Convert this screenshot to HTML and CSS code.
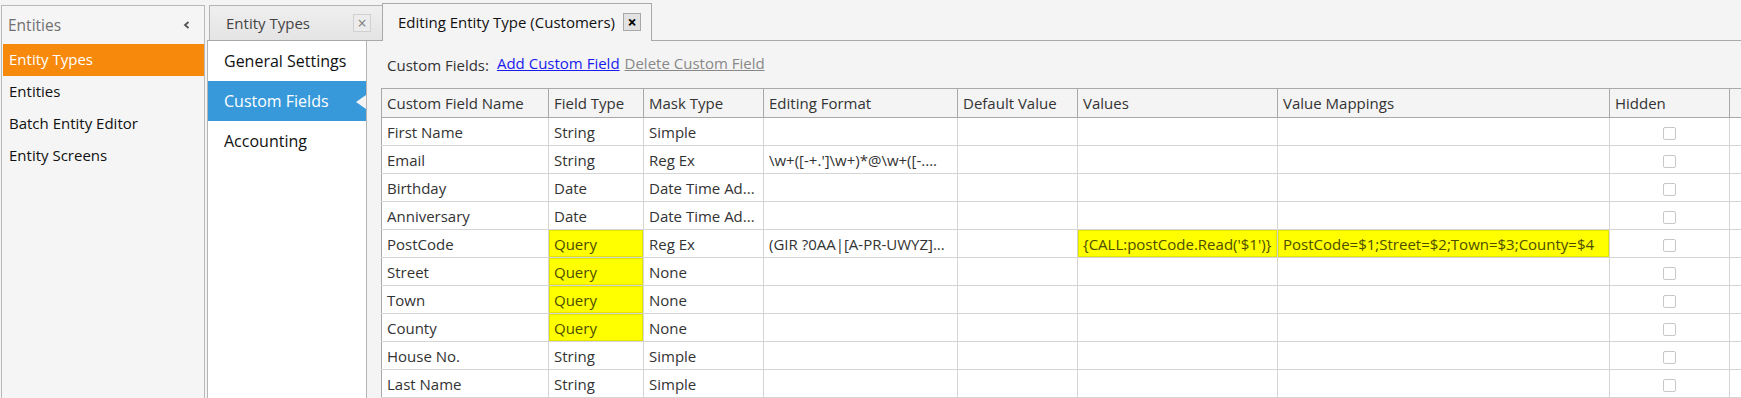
FILE: index.html
```html
<!DOCTYPE html>
<html lang="en">
<head>
    <meta charset="UTF-8">
    <title>Editing Entity Type (Customers)</title>
    <link rel="stylesheet" href="styles.css">
</head>
<body>
    <div class="app">
        <!-- Left navigation -->
        <aside class="side">
            <div class="side-head">
                <span>Entities</span>
                <svg class="collapse" width="7" height="8" viewBox="0 0 7 8"><path d="M5.5 1 L2 4 L5.5 7" fill="none" stroke="#555" stroke-width="1.8"/></svg>
            </div>
            <ul class="side-list">
                <li class="selected">Entity Types</li>
                <li>Entities</li>
                <li>Batch Entity Editor</li>
                <li>Entity Screens</li>
            </ul>
        </aside>

        <div class="work">
            <div class="tabs">
                <div class="tab">
                    <span>Entity Types</span>
                    <span class="tab-close">&times;</span>
                </div>
                <div class="tab active">
                    <span>Editing Entity Type (Customers)</span>
                    <span class="tab-close">&times;</span>
                </div>
            </div>

            <div class="page">
                <nav class="menu">
                    <div class="menu-item">General Settings</div>
                    <div class="menu-item current">Custom Fields</div>
                    <div class="menu-item">Accounting</div>
                </nav>

                <section class="content">
                    <div class="toolbar">
                        <span class="label">Custom Fields:</span>
                        <a href="#" class="link">Add Custom Field</a>
                        <a href="#" class="link disabled">Delete Custom Field</a>
                    </div>

                    <table class="grid">
                        <colgroup>
                            <col style="width:167px">
                            <col style="width:95px">
                            <col style="width:120px">
                            <col style="width:194px">
                            <col style="width:120px">
                            <col style="width:200px">
                            <col style="width:332px">
                            <col style="width:120px">
                            <col style="width:60px">
                        </colgroup>
                        <thead>
                            <tr>
                                <th>Custom Field Name</th>
                                <th>Field Type</th>
                                <th>Mask Type</th>
                                <th>Editing Format</th>
                                <th>Default Value</th>
                                <th>Values</th>
                                <th>Value Mappings</th>
                                <th>Hidden</th>
                                <th></th>
                            </tr>
                        </thead>
                        <tbody>
                            <tr>
                                <td>First Name</td><td>String</td><td>Simple</td><td></td><td></td><td></td><td></td>
                                <td class="check"><span class="box"></span></td><td></td>
                            </tr>
                            <tr>
                                <td>Email</td><td>String</td><td>Reg Ex</td><td>\w+([-+.']\w+)*@\w+([-....</td><td></td><td></td><td></td>
                                <td class="check"><span class="box"></span></td><td></td>
                            </tr>
                            <tr>
                                <td>Birthday</td><td>Date</td><td>Date Time Ad...</td><td></td><td></td><td></td><td></td>
                                <td class="check"><span class="box"></span></td><td></td>
                            </tr>
                            <tr>
                                <td>Anniversary</td><td>Date</td><td>Date Time Ad...</td><td></td><td></td><td></td><td></td>
                                <td class="check"><span class="box"></span></td><td></td>
                            </tr>
                            <tr>
                                <td>PostCode</td><td class="mark">Query</td><td>Reg Ex</td><td>(GIR ?0AA|[A-PR-UWYZ]...</td><td></td>
                                <td class="mark">{CALL:postCode.Read('$1')}</td>
                                <td class="mark">PostCode=$1;Street=$2;Town=$3;County=$4</td>
                                <td class="check"><span class="box"></span></td><td></td>
                            </tr>
                            <tr>
                                <td>Street</td><td class="mark">Query</td><td>None</td><td></td><td></td><td></td><td></td>
                                <td class="check"><span class="box"></span></td><td></td>
                            </tr>
                            <tr>
                                <td>Town</td><td class="mark">Query</td><td>None</td><td></td><td></td><td></td><td></td>
                                <td class="check"><span class="box"></span></td><td></td>
                            </tr>
                            <tr>
                                <td>County</td><td class="mark">Query</td><td>None</td><td></td><td></td><td></td><td></td>
                                <td class="check"><span class="box"></span></td><td></td>
                            </tr>
                            <tr>
                                <td>House No.</td><td>String</td><td>Simple</td><td></td><td></td><td></td><td></td>
                                <td class="check"><span class="box"></span></td><td></td>
                            </tr>
                            <tr>
                                <td>Last Name</td><td>String</td><td>Simple</td><td></td><td></td><td></td><td></td>
                                <td class="check"><span class="box"></span></td><td></td>
                            </tr>
                        </tbody>
                    </table>
                </section>
            </div>
        </div>
    </div>
</body>
</html>
```

FILE: styles.css
```css
/* Base */
html, body {
    margin: 0;
    height: 100%;
    overflow: hidden;
}

body {
    font-family: 'Open Sans', 'Noto Sans', sans-serif;
    font-size: 15px;
    color: #333;
    background: #f4f4f4;
}

.app {
    display: flex;
    height: 100%;
}

/* Left navigation */
.side {
    width: 202px;
    margin: 5px 0 0 1px;
    border: 1px solid #b9b9b9;
    border-bottom: none;
    background: #f5f5f5;
}

.side-head {
    display: flex;
    align-items: center;
    justify-content: space-between;
    height: 38px;
    padding: 0 14px 0 6px;
    color: #707070;
    font-size: 15.5px;
}

.side-list {
    list-style: none;
    margin: 0;
    padding: 0 0 0 1px;
}

.side-list li {
    height: 32px;
    line-height: 31px;
    padding-left: 6px;
    color: #111;
    font-size: 15px;
}

.side-list li.selected {
    background: #f78a0c;
    color: #fff;
}

/* Work area */
.work {
    flex: 1;
    display: flex;
    flex-direction: column;
    margin-left: 2px;
    min-width: 0;
}

.tabs {
    display: flex;
    align-items: flex-end;
    height: 40px;
    border-bottom: 1px solid #a9a9a9;
    flex-shrink: 0;
}

.tab {
    display: flex;
    align-items: center;
    justify-content: space-between;
    box-sizing: border-box;
    height: 35px;
    margin-left: 2px;
    padding: 0 11px 0 16px;
    width: 174px;
    border: 1px solid #b4b4b4;
    border-bottom: none;
    background: linear-gradient(#efefef, #e4e4e4);
    color: #444;
    font-size: 15px;
}

.tab.active {
    width: 270px;
    height: 38px;
    margin-left: -1px;
    margin-bottom: -1px;
    padding: 0 10px 2px 15px;
    border-color: #a9a9a9;
    background: #f4f4f4;
    color: #111;
}

.tab-close {
    display: inline-flex;
    align-items: center;
    justify-content: center;
    box-sizing: border-box;
    width: 18px;
    height: 18px;
    border: 1px solid #d0d0d0;
    background: #ececec;
    color: #808080;
    font-size: 16px;
    line-height: 1;
}

.tab.active .tab-close {
    border-color: #a8a8a8;
    background: #e2e2e2;
    color: #000;
    font-weight: bold;
}

.page {
    flex: 1;
    display: flex;
    min-height: 0;
}

/* Section menu */
.menu {
    width: 158px;
    flex-shrink: 0;
    border-left: 1px solid #b4b4b4;
    border-right: 1px solid #b4b4b4;
    background: #fff;
}

.menu-item {
    position: relative;
    height: 40px;
    line-height: 40px;
    padding-left: 16px;
    color: #111;
    font-size: 16px;
}

.menu-item.current {
    background: #3799da;
    color: #fff;
}

.menu-item.current::after {
    content: "";
    position: absolute;
    right: 0;
    top: 14px;
    border: 7px solid transparent;
    border-right: 10px solid #f4f4f4;
    border-left: none;
}

/* Content */
.content {
    flex: 1;
    min-width: 0;
    padding-left: 14px;
}

.toolbar {
    height: 47px;
    display: flex;
    align-items: center;
    padding-left: 6px;
}

.label {
    color: #333;
    margin-right: 8px;
}

.link {
    color: #1a1aee;
    margin-right: 5px;
    position: relative;
    top: -2px;
}

.link.disabled {
    color: #888;
}

/* Grid */
.grid {
    border-collapse: collapse;
    table-layout: fixed;
    width: 1408px;
}

.grid th,
.grid td {
    height: 27px;
    padding: 0 0 0 5px;
    line-height: 20px;
    white-space: nowrap;
    overflow: hidden;
    text-align: left;
    font-weight: normal;
}

.grid th {
    height: 28px;
    background: #f4f4f4;
    border: 1px solid #a9a9a9;
}

.grid td {
    background: #fff;
    border: 1px solid #d5d5d5;
}

.grid td:first-child {
    border-left-color: #a9a9a9;
}

.grid td.mark {
    background: #ffff00;
    color: #4d4d00;
    box-shadow: inset 0 0 0 1px #e4e400;
}

.grid td.check {
    padding: 0;
    text-align: center;
}

.box {
    display: inline-block;
    width: 11px;
    height: 11px;
    border: 1px solid #c8c8c8;
    border-radius: 2px;
    background: #fff;
    vertical-align: middle;
}
```
